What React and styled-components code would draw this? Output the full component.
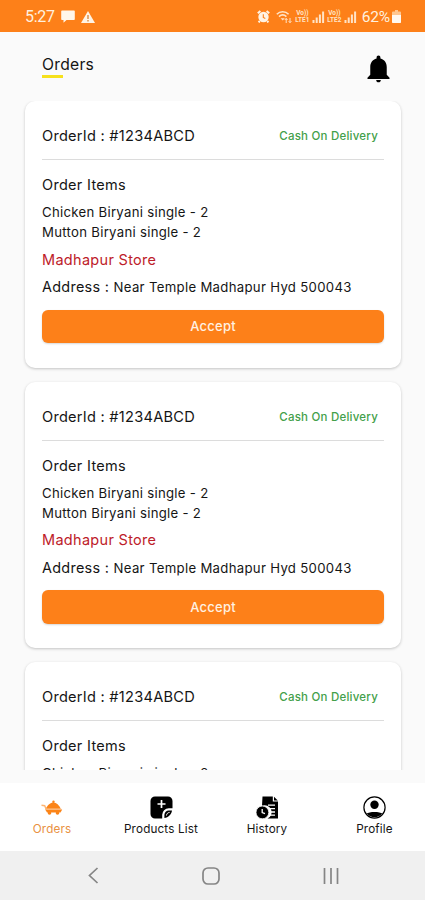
import React from "react";
import styled, { createGlobalStyle } from "styled-components";

const orders = [1, 2, 3].map((id) => ({
  id,
  code: "#1234ABCD",
  payment: "Cash On Delivery",
  items: ["Chicken Biryani single - 2", "Mutton Biryani single - 2"],
  store: "Madhapur Store",
  address: "Near Temple Madhapur Hyd 500043",
}));

const AlarmIcon = () => (
  <svg width="13" height="13" viewBox="0 0 13 13">
    <circle cx="6.5" cy="7" r="5.2" fill="#fff3e4" />
    <path d="M0.8 3.2L3.4 1M12.2 3.2L9.6 1M2.8 11L1.6 12.4M10.2 11l1.2 1.4" stroke="#fff3e4" strokeWidth="2" />
    <path d="M6.3 4.2v3.2l2 1" stroke="#fd8019" strokeWidth="1.1" fill="none" />
  </svg>
);

const WifiIcon = () => (
  <svg width="17" height="14" viewBox="0 0 17 14" fill="none" stroke="#ffe3c6">
    <path d="M0.8 4.2C4 1 9.4 1 12.6 4.2M3 6.6c2.2-2 5.2-2 7.4 0" strokeWidth="1.6" />
    <path d="M4.6 8.2h4.2L6.7 10.6z" fill="#ffe3c6" stroke="none" />
    <path d="M10.2 13V8.5M8.8 10l1.4-1.6 1.3 1.6M14 8v4.6M12.7 11.2l1.3 1.5 1.4-1.5" strokeWidth="1" />
  </svg>
);

const SignalIcon = () => (
  <svg width="13" height="12" viewBox="0 0 13 12" fill="#ffe3c6">
    <rect x="0.5" y="9" width="2" height="3" />
    <rect x="3.7" y="6.5" width="2" height="5.5" />
    <rect x="6.9" y="3.5" width="2" height="8.5" />
    <rect x="10.1" y="0.5" width="2" height="11.5" />
  </svg>
);

const BatteryIcon = () => (
  <svg width="9" height="13" viewBox="0 0 9 13">
    <path d="M3 0h3v1.5h2a1 1 0 0 1 1 1V12a1 1 0 0 1-1 1H1a1 1 0 0 1-1-1V2.5a1 1 0 0 1 1-1h2z" fill="#ffc68f" />
    <path d="M0 5h9v7a1 1 0 0 1-1 1H1a1 1 0 0 1-1-1z" fill="#fff8f0" />
  </svg>
);

const ChatIcon = () => (
  <svg width="14" height="13" viewBox="0 0 14 13">
    <path d="M1 0.5h12a.8.8 0 0 1 .8.8v7.9a.8.8 0 0 1-.8.8H5.5L2.5 12.8V10H1a.8.8 0 0 1-.8-.8V1.3A.8.8 0 0 1 1 .5z" fill="#fff6ea" />
  </svg>
);

const WarningIcon = () => (
  <svg width="14" height="12" viewBox="0 0 14 12">
    <path d="M7 0l7 12H0z" fill="#fff3e4" />
    <path d="M7 4v4M7 9v1.5" stroke="#d98a42" strokeWidth="1.4" />
  </svg>
);

const BellIcon = () => (
  <svg width="23" height="28" viewBox="0 0 24 29">
    <path
      d="M12 0.5c1.3 0 2 .9 2 2v1c4.2 1 6.6 4.4 6.6 8.8v8.2l2.9 3V25H.5v-1.5l2.9-3v-8.2C3.4 7.9 5.8 4.5 10 3.5v-1c0-1.1.7-2 2-2z"
      fill="#000"
    />
    <path d="M9.6 26h4.8c0 1.4-1 2.4-2.4 2.4S9.6 27.4 9.6 26z" fill="#000" />
  </svg>
);

const OrdersIcon = () => (
  <svg width="22" height="16" viewBox="0 0 22 16" fill="#fb8418">
    <circle cx="12.5" cy="1.7" r="1.2" />
    <path d="M4.8 8.8C6.5 5 9.5 2.6 12.5 2.6s5.600 2.400 7.300 6.200z" />
    <path d="M4.2 9.500h17l-1.700 2.900H6z" />
    <path d="M0.500 5.200l3.200.5 1.800 4.300" stroke="#fdb573" strokeWidth="1.400" fill="none" />
    <circle cx="8.500" cy="13" r="1.800" />
    <circle cx="16.500" cy="13" r="1.800" />
    <path d="M4.400 9.200h16" stroke="#fda85c" strokeWidth=".6" />
  </svg>
);

const ProductsIcon = () => (
  <svg width="23" height="23" viewBox="0 0 23 23">
    <path
      d="M5 0.5h13A4.5 4.5 0 0 1 22.5 5v7.2h-3.7a6.6 6.6 0 0 0-6.6 6.6v3.7H5A4.5 4.5 0 0 1 .5 18V5A4.5 4.5 0 0 1 5 .5z"
      fill="#000"
    />
    <path d="M14.4 22v-3.200a4.400 4.400 0 0 1 4.400-4.400H22c-.5 3.800-3.800 7.100-7.600 7.600z" fill="#000" />
    <path d="M16.5 19.5c.2-1.900 1.300-2.900 3.100-3.100" stroke="#fff" strokeWidth="1" fill="none" />
    <path d="M11.5 4v8M7.5 8h8" stroke="#fff" strokeWidth="1.7" />
  </svg>
);

const HistoryIcon = () => (
  <svg width="23" height="23" viewBox="0 0 23 23">
    <path d="M6.5 0.5h10.300v5h5.200v17H11.500A6.800 6.800 0 0 0 6 9.800z" fill="#000" />
    <path d="M18 0.800l3.800 3.700H18z" fill="#000" />
    <path d="M12 9.200h7M13.500 12.700h5.500M14 16h5M13.500 19.200h5.500" stroke="#fff" strokeWidth="1.3" />
    <circle cx="6.4" cy="16.4" r="6.4" fill="#000" stroke="#fff" strokeWidth=".8" />
    <path d="M6.2 13v3.600l2.800 1" stroke="#fff" strokeWidth="1.3" fill="none" />
  </svg>
);

const ProfileIcon = () => (
  <svg width="23" height="23" viewBox="0 0 23 23">
    <circle cx="11.5" cy="11.5" r="10.6" fill="#fff" stroke="#000" strokeWidth="1.2" />
    <circle cx="11.5" cy="8.8" r="4.2" fill="#000" />
    <path d="M3.7 17.5c2.100-2.100 13.500-2.100 15.600 0a10 10 0 0 1-15.600 0z" fill="#000" />
  </svg>
);

const tabs = [
  { label: "Orders", icon: <OrdersIcon />, active: true, width: 104 },
  { label: "Products List", icon: <ProductsIcon />, width: 114 },
  { label: "History", icon: <HistoryIcon />, width: 98 },
  { label: "Profile", icon: <ProfileIcon />, width: 101 },
];

const OrderCard = ({ order }) => (
  <Card>
    <CardTop>
      <OrderId>OrderId : {order.code}</OrderId>
      <Payment>{order.payment}</Payment>
    </CardTop>
    <ItemsTitle>Order Items</ItemsTitle>
    <Items>
      {order.items.map((item) => (
        <li key={item}>{item}</li>
      ))}
    </Items>
    <Store>{order.store}</Store>
    <Address>
      Address : <span>{order.address}</span>
    </Address>
    <AcceptButton>Accept</AcceptButton>
  </Card>
);

const App = () => {
  return (
    <Screen>
      <GlobalStyle />
      <StatusBar>
        <Clock>5:27</Clock>
        <ChatIcon />
        <WarningIcon />
        <StatusRight>
          <AlarmIcon />
          <WifiIcon />
          <Lte>
            <span>Vo))</span>
            <span>LTE1</span>
          </Lte>
          <SignalIcon />
          <Lte>
            <span>Vo))</span>
            <span>LTE2</span>
          </Lte>
          <SignalIcon />
          <Percent>62%</Percent>
          <BatteryIcon />
        </StatusRight>
      </StatusBar>
      <Header>
        <Title>Orders</Title>
        <BellIcon />
      </Header>
      <OrderList>
        {orders.map((order) => (
          <OrderCard key={order.id} order={order} />
        ))}
      </OrderList>
      <TabBar>
        {tabs.map((tab) => (
          <Tab key={tab.label} $active={tab.active} $width={tab.width}>
            {tab.icon}
            <span>{tab.label}</span>
          </Tab>
        ))}
      </TabBar>
      <SystemNav>
        <svg width="11" height="17" viewBox="0 0 11 17" fill="none" stroke="#858585" strokeWidth="1.7">
          <path d="M9.5 1L1.5 8.5l8 7.5" />
        </svg>
        <svg width="18" height="18" viewBox="0 0 18 18" fill="none" stroke="#858585" strokeWidth="1.7">
          <rect x="1" y="1" width="16" height="16" rx="5" />
        </svg>
        <svg width="16" height="16" viewBox="0 0 16 16" stroke="#858585" strokeWidth="1.7">
          <path d="M1.5 0v16M8 0v16M14.5 0v16" />
        </svg>
      </SystemNav>
    </Screen>
  );
};

export default App;

const GlobalStyle = createGlobalStyle`
  * {
    box-sizing: border-box;
  }
  body {
    margin: 0;
    background: #fafafa;
    overflow: hidden;
    font-family: Inter, "Liberation Sans", sans-serif;
  }
  svg {
    display: block;
    flex: none;
  }
`;

const Screen = styled.div`
  width: 425px;
  height: 900px;
  display: flex;
  flex-direction: column;
  background: #fafafa;
  color: #151515;
  white-space: nowrap;
`;

const StatusBar = styled.div`
  flex: none;
  height: 32px;
  display: flex;
  align-items: center;
  gap: 6px;
  padding: 1px 24px 0 25px;
  background: #fd8019;
  color: #fff0df;
  font-family: Roboto, sans-serif;
`;

const Clock = styled.span`
  font-size: 16px;
  letter-spacing: -0.3px;
`;

const StatusRight = styled.div`
  display: flex;
  align-items: center;
  margin-left: auto;
  gap: 2px;
  svg:first-child {
    margin-right: 4px;
  }
`;

const Lte = styled.div`
  display: flex;
  flex-direction: column;
  align-items: center;
  width: 15px;
  font-size: 6.5px;
  font-weight: 700;
  line-height: 7px;
  color: #ffe3c6;
`;

const Percent = styled.span`
  font-size: 15.5px;
  letter-spacing: -0.2px;
  margin-left: 3px;
`;

const Header = styled.header`
  flex: none;
  height: 69px;
  display: flex;
  justify-content: space-between;
  align-items: flex-start;
  padding: 23px 35.5px 0 42px;
`;

const Title = styled.h1`
  margin: 0;
  font-size: 15.7px;
  font-weight: 400;
  line-height: 20px;
  letter-spacing: 0.25px;
  &::after {
    content: "";
    display: block;
    width: 21px;
    height: 3px;
    background: #f6e11c;
  }
`;

const OrderList = styled.main`
  flex: none;
  height: 669px;
  margin-bottom: 13px;
  padding: 0 24px 0 25px;
  display: flex;
  flex-direction: column;
  gap: 14px;
  overflow: hidden;
`;

const Card = styled.section`
  flex: none;
  height: 266.7px;
  padding: 24px 17px 0;
  border-radius: 10px;
  background: #fff;
  box-shadow: 0 1px 3px rgba(0, 0, 0, 0.22);
`;

const CardTop = styled.div`
  display: flex;
  justify-content: space-between;
  align-items: center;
  height: 35px;
  padding: 0 6px 12px 0;
  border-bottom: 1.5px solid #dcdcdc;
`;

const OrderId = styled.div`
  font-size: 14.6px;
  letter-spacing: 0.25px;
`;

const Payment = styled.div`
  color: #43a04a;
  font-size: 11.5px;
  font-weight: 500;
  letter-spacing: 0.22px;
`;

const ItemsTitle = styled.div`
  margin-top: 15px;
  font-size: 14.5px;
  line-height: 20px;
  letter-spacing: 0.3px;
`;

const Items = styled.ul`
  list-style: none;
  margin: 7px 0 0;
  padding: 0;
  font-size: 13.2px;
  line-height: 20px;
  letter-spacing: 0.28px;
`;

const Store = styled.div`
  margin-top: 7.5px;
  color: #bd2029;
  font-size: 14.5px;
  line-height: 20px;
  letter-spacing: 0.3px;
`;

const Address = styled.div`
  margin-top: 7.5px;
  font-size: 14.4px;
  line-height: 20px;
  letter-spacing: 0.3px;
  span {
    font-size: 13.2px;
  }
`;

const AcceptButton = styled.button`
  display: block;
  width: 100%;
  height: 33.5px;
  margin-top: 12.5px;
  padding: 0;
  border: 0;
  border-radius: 6px;
  background: #fd8019;
  color: #fff1e2;
  font-family: inherit;
  font-size: 13px;
  font-weight: 500;
  letter-spacing: 0.25px;
  box-shadow: 0 1px 2px rgba(0, 0, 0, 0.16);
`;

const TabBar = styled.nav`
  flex: none;
  height: 68px;
  display: flex;
  background: #fff;
  > div:last-child {
    margin-left: auto;
  }
`;

const Tab = styled.div`
  width: ${(props) => props.$width}px;
  padding: 12px 0 13px;
  display: flex;
  flex-direction: column;
  align-items: center;
  color: ${(props) => (props.$active ? "#e99142" : "#151515")};
  font-size: 11.7px;
  line-height: 18px;
  letter-spacing: 0.15px;
  svg {
    margin: auto 0;
  }
`;

const SystemNav = styled.footer`
  flex: none;
  height: 49px;
  display: flex;
  justify-content: space-between;
  align-items: center;
  padding: 0 86px 0 88px;
  background: #f0f0f0;
`;
